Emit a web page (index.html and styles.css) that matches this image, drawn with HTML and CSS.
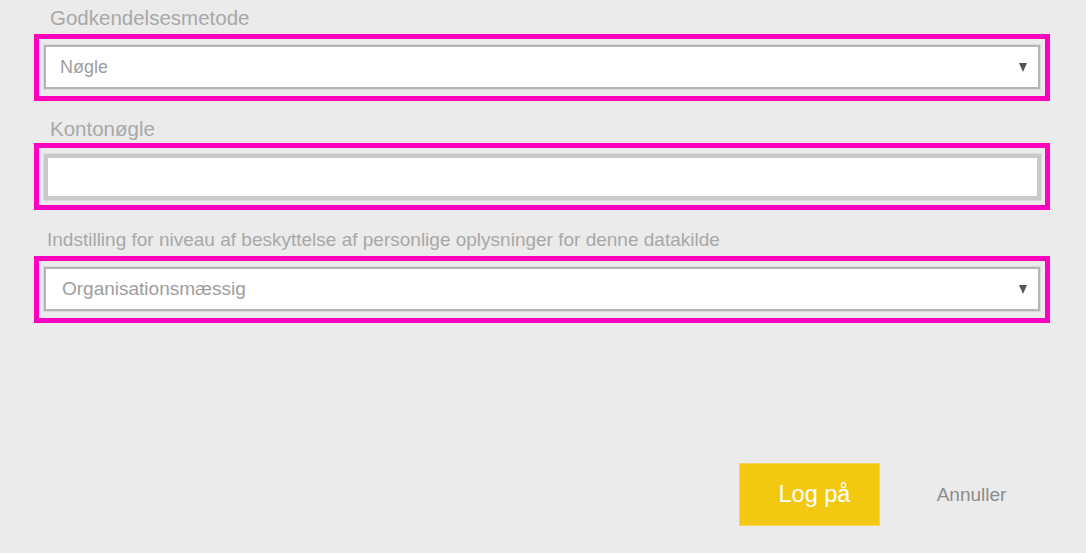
FILE: index.html
```html
<!DOCTYPE html>
<html lang="da">
<head>
<meta charset="utf-8">
<title>Log på</title>
<link rel="stylesheet" href="styles.css">
</head>
<body>
<div class="page">
  <div class="field field-first">
    <div class="label">Godkendelsesmetode</div>
    <div class="highlight">
      <div class="select select-a">
        <span class="value">Nøgle</span>
        <span class="arrow"></span>
      </div>
    </div>
  </div>
  <div class="field field-second">
    <div class="label">Kontonøgle</div>
    <div class="highlight highlight-input">
      <div class="input"></div>
    </div>
  </div>
  <div class="field field-third">
    <div class="label label-small">Indstilling for niveau af beskyttelse af personlige oplysninger for denne datakilde</div>
    <div class="highlight">
      <div class="select select-b">
        <span class="value">Organisationsmæssig</span>
        <span class="arrow"></span>
      </div>
    </div>
  </div>
  <div class="actions">
    <button class="btn btn-primary">Log på</button>
    <button class="btn btn-link">Annuller</button>
  </div>
</div>
</body>
</html>
```
FILE: styles.css
```css
* { box-sizing: border-box; }
html, body {
  margin: 0;
  padding: 0;
  background: #ebebeb;
  font-family: "Liberation Sans", Arial, sans-serif;
}
.page {
  width: 1086px;
  height: 553px;
  padding: 6px 0 0 34px;
}
.field { width: 1016px; }
.label {
  font-size: 20.5px;
  line-height: 23px;
  color: #a8a8a8;
  padding-left: 16px;
  margin-bottom: 5px;
}
.field-second { margin-top: 16px; }
.field-second .label { margin-bottom: 3px; }
.field-third { margin-top: 19px; }
.label-small {
  font-size: 19px;
  line-height: 22px;
  padding-left: 13px;
  margin-bottom: 5px;
}
.highlight {
  border: 5px solid #ff00bf;
  padding: 6px 5px 7px 5px;
}
.highlight-input { padding: 6px 4px 5px 5px; }
.select {
  height: 44px;
  background: #fff;
  border: 2px solid #b5b5b5;
  box-shadow: 0 0 0 1px #dadada;
  display: flex;
  align-items: center;
  justify-content: space-between;
  padding: 0 11px 0 14px;
  color: #9e9e9e;
}
.select-a .value { font-size: 18px; }
.select-b { padding-left: 16px; }
.select-b .value { font-size: 19px; }
.arrow {
  width: 0;
  height: 0;
  border-left: 4px solid transparent;
  border-right: 4px solid transparent;
  border-top: 9px solid #555;
  margin-top: 1px;
}
.input {
  height: 46px;
  background: #fff;
  border: 4px solid #cacaca;
  box-shadow: 0 0 0 1px #dedede;
}
.actions {
  display: flex;
  justify-content: flex-start;
  gap: 21px;
  margin-top: 140px;
  padding-left: 705px;
}
.btn {
  font-family: "Liberation Sans", Arial, sans-serif;
  border: none;
  height: 63px;
  width: 141px;
  padding: 0;
  cursor: pointer;
}
.btn-primary {
  background: #f2c811;
  color: #fff;
  font-size: 23.5px;
  padding-left: 10px;
  border: 1px solid #f5d45a;
}
.btn-link {
  background: transparent;
  color: #8c8c8c;
  font-size: 19px;
}
```
